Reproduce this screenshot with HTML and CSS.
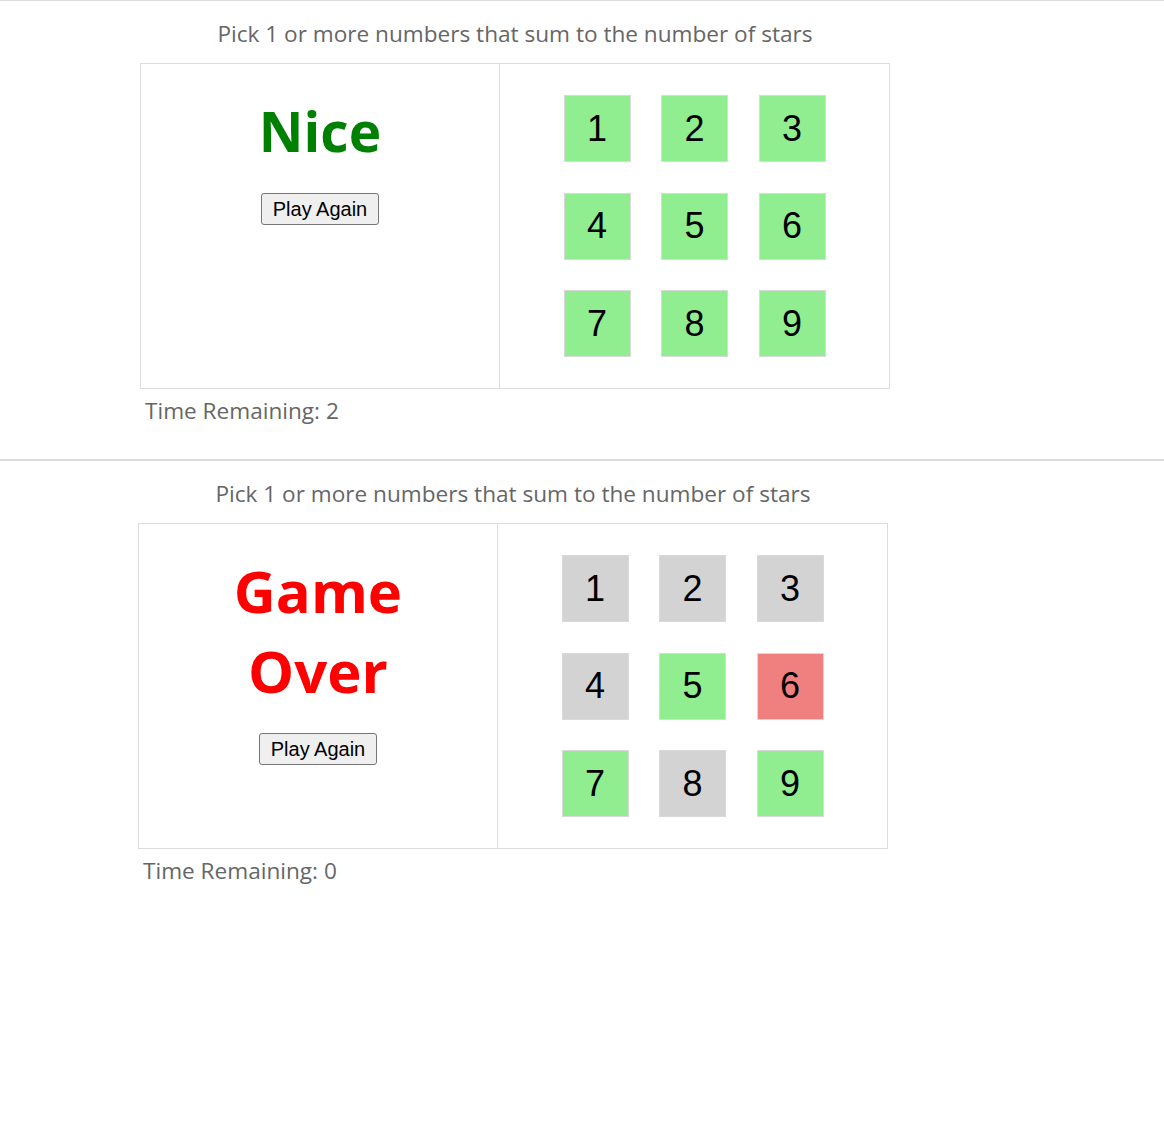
FILE: index.html
```html
<!DOCTYPE html>
<html>
<head>
<meta charset="utf-8">
<link rel="stylesheet" href="styles.css">
</head>
<body>
<section class="game game--first">
  <div class="game-inner">
    <div class="help">Pick 1 or more numbers that sum to the number of stars</div>
    <div class="body">
      <div class="left">
        <div class="status status--win">Nice</div>
        <button class="play-again">Play Again</button>
      </div>
      <div class="right">
        <div class="number available">1</div>
        <div class="number available">2</div>
        <div class="number available">3</div>
        <div class="number available">4</div>
        <div class="number available">5</div>
        <div class="number available">6</div>
        <div class="number available">7</div>
        <div class="number available">8</div>
        <div class="number available">9</div>
      </div>
    </div>
    <div class="timer">Time Remaining: 2</div>
  </div>
</section>
<section class="game game--second">
  <div class="game-inner">
    <div class="help">Pick 1 or more numbers that sum to the number of stars</div>
    <div class="body">
      <div class="left">
        <div class="status status--lost">Game<br>Over</div>
        <button class="play-again">Play Again</button>
      </div>
      <div class="right">
        <div class="number used">1</div>
        <div class="number used">2</div>
        <div class="number used">3</div>
        <div class="number used">4</div>
        <div class="number available">5</div>
        <div class="number wrong">6</div>
        <div class="number available">7</div>
        <div class="number used">8</div>
        <div class="number available">9</div>
      </div>
    </div>
    <div class="timer">Time Remaining: 0</div>
  </div>
</section>
</body>
</html>
```
FILE: styles.css
```css
html, body {
  margin: 0;
  padding: 0;
  background: #fff;
}

body {
  font-family: "Open Sans", "Noto Sans", sans-serif;
}

.game {
  border-top: 1px solid #dcdcdc;
  height: 458px;
}

.game--second {
  border-top-width: 2px;
}

.game-inner {
  width: 750px;
  margin-left: 140px;
}

.game--second .game-inner {
  margin-left: 138px;
}

.help {
  text-align: center;
  color: #666;
  font-size: 22.6px;
  line-height: 30px;
  padding-top: 18px;
  height: 62px;
  box-sizing: border-box;
}

.body {
  display: flex;
  border: 1px solid #ddd;
  height: 326px;
  box-sizing: border-box;
}

.left {
  width: 358px;
  border-right: 1px solid #ddd;
  display: flex;
  flex-direction: column;
  align-items: center;
  padding-top: 27px;
}

.status {
  font-weight: 700;
  line-height: 80px;
  text-align: center;
}

.status--win {
  color: #008000;
  font-size: 55px;
}

.status--lost {
  color: #ff0000;
  font-size: 58px;
}

.play-again {
  margin-top: 22px;
  width: 118px;
  height: 32px;
  font-family: "Liberation Sans", Arial, sans-serif;
  font-size: 20px;
  color: #000;
  background: #efefef;
  border: 1px solid #767676;
  border-radius: 3px;
  padding: 0;
}

.right {
  flex: 1;
  display: grid;
  grid-template-columns: repeat(3, 67px);
  grid-auto-rows: 67px;
  column-gap: 30.5px;
  row-gap: 30.5px;
  justify-content: center;
  padding-top: 31px;
}

.number {
  box-sizing: border-box;
  border: 1px solid #d9d9d9;
  display: flex;
  align-items: center;
  justify-content: center;
  font-family: "Liberation Sans", Arial, sans-serif;
  font-size: 36px;
  color: #000;
}

.available {
  background: #90ee90;
}

.used {
  background: #d3d3d3;
}

.wrong {
  background: #f08080;
}

.timer {
  color: #666;
  font-size: 22.6px;
  line-height: 28px;
  padding-top: 8px;
  padding-left: 5px;
}
```
